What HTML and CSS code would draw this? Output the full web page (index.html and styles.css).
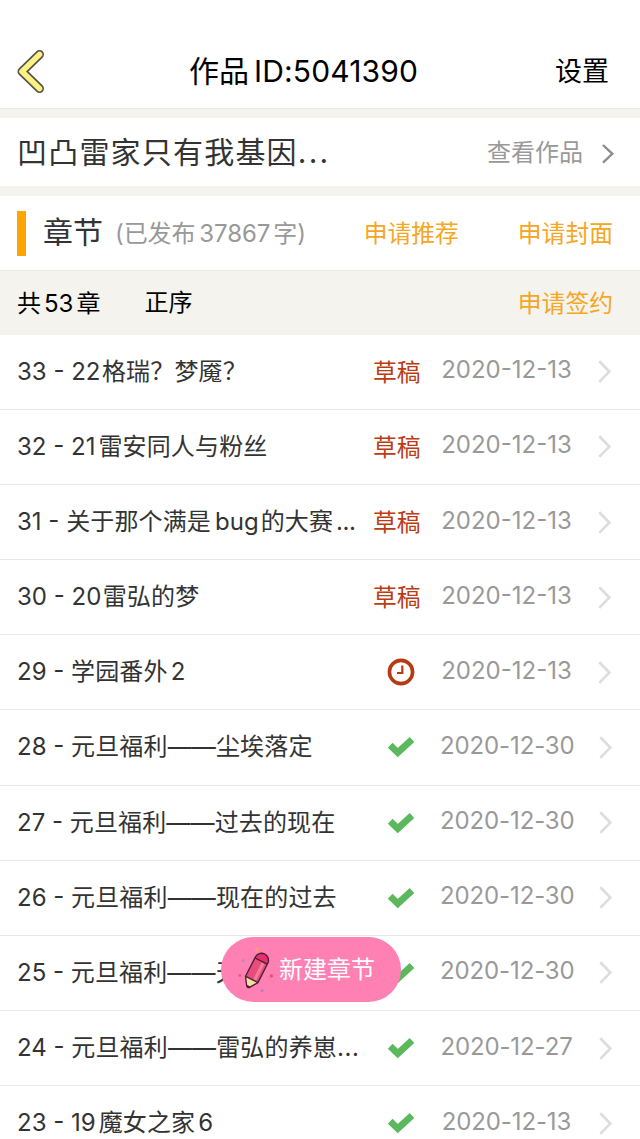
FILE: index.html
```html
<!DOCTYPE html>
<html lang="zh-CN">
<head>
<meta charset="utf-8">
<title>作品管理</title>
<link rel="stylesheet" href="styles.css">
</head>
<body>
<svg class="defs" width="0" height="0" aria-hidden="true">
  <symbol id="arrow" viewBox="0 0 16 26"><path d="M2.3 2.3 12.3 12.6 2.3 22.9" fill="none" stroke="currentColor" stroke-width="2.7"/></symbol>
  <symbol id="check" viewBox="0 0 28 22"><path d="M3.2 9.3 10.8 16.6 25 3.6" fill="none" stroke="#5cb85c" stroke-width="6.8"/></symbol>
</svg>
<header class="navbar">
  <svg class="back" viewBox="0 0 28 44"><path d="M22.5 5.5 5 22.5 22.5 39.5" fill="none" stroke="#55534d" stroke-width="9" stroke-linecap="round" stroke-linejoin="round"/><path d="M22.5 5.5 5 22.5 22.5 39.5" fill="none" stroke="#fbf281" stroke-width="5.6" stroke-linecap="round" stroke-linejoin="round"/></svg>
  <h1 class="nav-title">作品<span class="nav-id">ID:5041390</span></h1>
  <span class="nav-action">设置</span>
</header>
<section class="work">
  <span class="work-name">凹凸雷家只有我基因<span class="dots">...</span></span>
  <span class="work-view">查看作品</span>
  <svg class="work-arrow" viewBox="0 0 14 22"><path d="M2 2 11.3 10.8 2 19.6" fill="none" stroke="#8e8e8e" stroke-width="2.4"/></svg>
</section>
<section class="chapters-head">
  <i class="marker"></i>
  <h2 class="head-title">章节</h2>
  <span class="head-count">(已发布<span class="head-num">37867</span>字)</span>
  <a class="link link-recommend">申请推荐</a>
  <a class="link link-cover">申请封面</a>
</section>
<section class="toolbar">
  <span class="total">共<span class="total-num">53</span>章</span>
  <span class="order">正序</span>
  <a class="link link-sign">申请签约</a>
</section>
<main class="list">
  <div class="row"><span class="title">33 - 22<span class="han gap">格瑞？梦魇？</span></span><span class="draft">草稿</span><time class="date">2020-12-13</time><svg class="arrow"><use href="#arrow"/></svg></div>
  <div class="row"><span class="title">32 - 21<span class="han gap-wide">雷安同人与粉丝</span></span><span class="draft">草稿</span><time class="date">2020-12-13</time><svg class="arrow"><use href="#arrow"/></svg></div>
  <div class="row"><span class="title">31 - <span class="han">关于那个满是</span><span class="latin bug">bug</span><span class="han">的大赛</span><span class="latin more">...</span></span><span class="draft">草稿</span><time class="date">2020-12-13</time><svg class="arrow"><use href="#arrow"/></svg></div>
  <div class="row"><span class="title">30 - 20<span class="han gap">雷弘的梦</span></span><span class="draft">草稿</span><time class="date">2020-12-13</time><svg class="arrow"><use href="#arrow"/></svg></div>
  <div class="row"><span class="title">29 - <span class="han">学园番外</span><span class="latin">2</span></span><svg class="clock" viewBox="0 0 28 28"><circle cx="14" cy="14" r="11.6" fill="none" stroke="#b93a12" stroke-width="3.6"/><path d="M15.3 7.6V15H10" fill="none" stroke="#b93a12" stroke-width="2.2"/></svg><time class="date">2020-12-13</time><svg class="arrow"><use href="#arrow"/></svg></div>
  <div class="row published"><span class="title">28 - <span class="han">元旦福利——尘埃落定</span></span><svg class="check"><use href="#check"/></svg><time class="date">2020-12-30</time><svg class="arrow"><use href="#arrow"/></svg></div>
  <div class="row published"><span class="title">27 - <span class="han">元旦福利——过去的现在</span></span><svg class="check"><use href="#check"/></svg><time class="date">2020-12-30</time><svg class="arrow"><use href="#arrow"/></svg></div>
  <div class="row published"><span class="title">26 - <span class="han">元旦福利——现在的过去</span></span><svg class="check"><use href="#check"/></svg><time class="date">2020-12-30</time><svg class="arrow"><use href="#arrow"/></svg></div>
  <div class="row published"><span class="title">25 - <span class="han">元旦福利——天</span></span><svg class="check"><use href="#check"/></svg><time class="date">2020-12-30</time><svg class="arrow"><use href="#arrow"/></svg></div>
  <div class="row published"><span class="title">24 - <span class="han">元旦福利——雷弘的养崽</span><span class="dots">...</span></span><svg class="check"><use href="#check"/></svg><time class="date">2020-12-27</time><svg class="arrow"><use href="#arrow"/></svg></div>
  <div class="row published"><span class="title">23 - 19<span class="han gap-wide">魔女之家</span><span class="latin">6</span></span><svg class="check"><use href="#check"/></svg><time class="date">2020-12-13</time><svg class="arrow"><use href="#arrow"/></svg></div>
</main>
<button class="create">
  <svg class="pencil" viewBox="0 0 38 46">
    <g transform="translate(18.3 23.5) rotate(27) scale(1.12)">
      <path d="M-6.2-10.5A6.2 6 0 0 1 6.2-10.5V9L1.2 16.5Q0 17.5-1.2 16.5L-6.2 9Z" fill="#e84b7c"/>
      <path d="M-6.2-10V-11A6.2 6 0 0 1 6.2-11V-10Z" fill="#ea2d6b"/>
      <path d="M-6.2 9H6.2L1.2 16.5Q0 17.5-1.2 16.5Z" fill="#fbd9a0"/>
      <path d="M2.5-8.5V8" stroke="#f47c9b" stroke-width="2.8"/>
      <path d="M-6.2-10.5A6.2 6 0 0 1 6.2-10.5V9L1.2 16.5Q0 17.5-1.2 16.5L-6.2 9ZM-6-9.5H6M-6 9H6" fill="none" stroke="#432035" stroke-width="1.15" stroke-linejoin="round"/>
      <path d="M-1.8 15.2H1.8L0 17.8Z" fill="#432035"/>
    </g>
    <circle cx="19" cy="2.5" r="2" fill="#ffa06b"/><circle cx="5" cy="13.5" r="1.6" fill="#b988c8"/><circle cx="1.8" cy="28.5" r="1.3" fill="#f0516f"/><circle cx="33.3" cy="29" r="1.7" fill="#f34c60"/><circle cx="24" cy="43.5" r="1.5" fill="#ac80cc"/>
  </svg>
  <span class="create-label">新建章节</span>
</button>
</body>
</html>
```
FILE: styles.css
```css
* { box-sizing: border-box; }
body {
  margin: 0;
  width: 640px;
  height: 1139px;
  overflow: hidden;
  background: #f4f3ee;
  color: #333;
  font-family: Inter, "Noto Sans CJK SC", sans-serif;
  font-size: 24px;
}
.defs { position: absolute; }
svg, i, span, time, a { flex: none; }
h1, h2 { margin: 0; font-weight: 400; }
.navbar {
  display: flex;
  align-items: center;
  height: 108px;
  padding: 36px 31px 0 17px;
  background: #fff;
  color: #000;
  box-shadow: 0 1px 0 #ebebeb;
}
.back { width: 28px; height: 44px; margin-top: -3px; }
.nav-title { width: 235px; margin: -2px 0 0 144px; font-size: 30px; line-height: 40px; white-space: nowrap; }
.nav-id { margin-left: 5px; letter-spacing: 0.15px; }
.nav-action { margin-left: auto; font-size: 27px; line-height: 40px; }
.work {
  display: flex;
  align-items: center;
  height: 68px;
  margin-top: 10px;
  padding: 0 25px 0 17px;
  background: #fff;
}
.work-name { margin-top: -1px; font-size: 30px; letter-spacing: 1.2px; line-height: 40px; white-space: nowrap; }
.work-name .dots { letter-spacing: 2.2px; }
.work-view { margin: 1px 0 0 auto; color: #999; line-height: 36px; }
.work-arrow { width: 14px; height: 22px; margin: 3px 0 0 18px; }
.chapters-head {
  display: flex;
  align-items: center;
  height: 74px;
  margin-top: 10px;
  padding: 0 27px 0 17px;
  background: #fff;
  box-shadow: 0 1px 0 #ebe9e5;
}
.marker { width: 9px; height: 45px; background: #ffa500; }
.head-title { margin: -3px 0 0 17px; font-size: 30px; line-height: 40px; }
.head-count { margin: -4px 0 0 12px; color: #999; letter-spacing: -0.1px; white-space: nowrap; }
.head-num { margin: 0 3px 0 4px; }
.link { color: #f5a623; font-size: 23.8px; line-height: 36px; }
.link-recommend { margin: 2px 0 0 auto; }
.link-cover { margin: 2px 0 0 59px; }
.toolbar {
  display: flex;
  align-items: center;
  height: 64.7px;
  padding: 2px 27px 0 17px;
  color: #000;
}
.total { margin-top: -3px; }
.total-num { margin: 0 3px; }
.order { margin: -6px 0 0 44px; }
.link-sign { margin: 2px 0 0 auto; }
.list { background: #fff; }
.row {
  display: flex;
  align-items: center;
  height: 75.15px;
  padding: 0 27px 0 17px;
  border-bottom: 1px solid #e8e8e8;
}
.title { width: 356px; margin-top: -5px; white-space: nowrap; }
.han { letter-spacing: 0.15px; }
.gap { margin-left: 1.5px; }
.gap-wide { margin-left: 3px; }
.latin { margin: 0 3px; }
.bug { margin: 0 2px 0 4px; }
.more { letter-spacing: -0.5px; }
.row .dots { letter-spacing: 0.6px; }
.draft { margin-top: -3px; color: #bb3b12; font-size: 23.8px; }
.date { width: 133px; margin: -4px 0 0 auto; color: #999; text-align: center; white-space: nowrap; }
.published .date { margin-right: 1px; letter-spacing: -0.12px; }
.arrow { width: 16px; height: 26px; margin: 1px 0 0 24px; color: #ddd; }
.published { padding-right: 26px; }
.clock { width: 28px; height: 28px; margin: -1px 0 0 14px; }
.check { width: 28px; height: 22px; margin-left: 14px; }
.create {
  position: fixed;
  left: 221px;
  top: 937px;
  display: flex;
  align-items: center;
  width: 180px;
  height: 65px;
  padding: 0 0 0 17px;
  border: 0;
  border-radius: 33px;
  background: #ff80b3;
  color: #fff;
  font: 24px Inter, "Noto Sans CJK SC", sans-serif;
}
.pencil { width: 38px; height: 46px; }
.create-label { margin: -4px 0 0 3px; }
```
